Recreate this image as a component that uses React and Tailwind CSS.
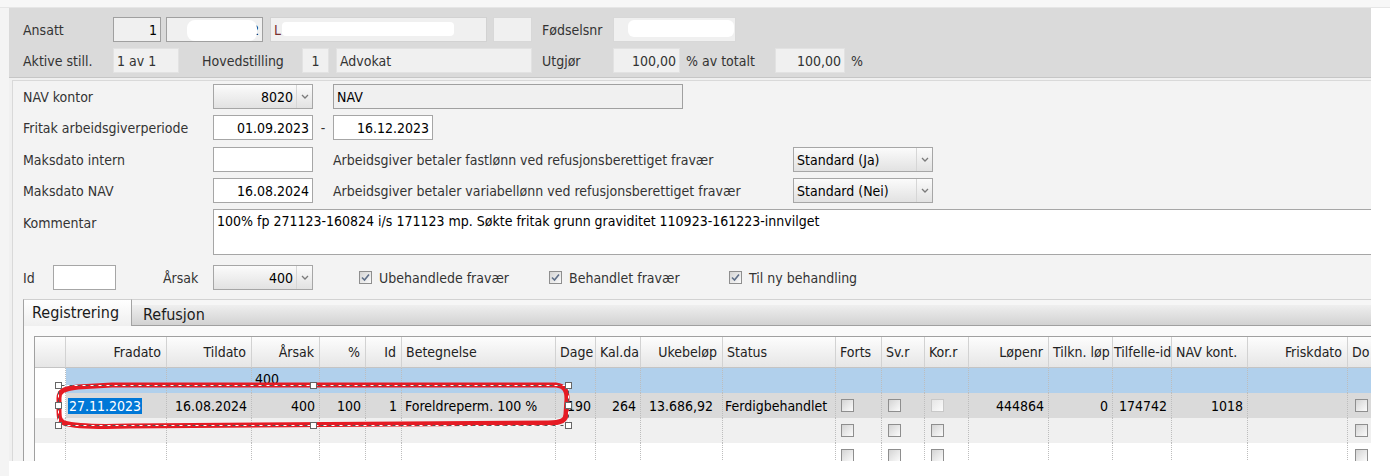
import React from "react";

const font = "font-['DejaVu_Sans_Condensed','Liberation_Sans',sans-serif]";

function Chevron() {
  return (
    <svg width="8" height="5" viewBox="0 0 8 5">
      <path d="M1 1 L4 4 L7 1" fill="none" stroke="#7a7a7a" strokeWidth="1.3" />
    </svg>
  );
}

function Select({ w, value, left }) {
  return (
    <div className={`flex h-[25px] ${w} border border-[#a6a6a6] bg-linear-to-b from-[#fbfbfb] to-[#e2e2e2] text-black`}>
      <div className={`flex flex-1 items-center ${left ? "pl-[3px]" : "justify-end pr-[3px]"}`}>{value}</div>
      <div className="flex w-[16px] items-center justify-center border-l border-[#d6d6d6]">
        <Chevron />
      </div>
    </div>
  );
}

function Field({ w, value, bg = "bg-white", border = "border-[#a6a6a6]", left }) {
  return (
    <div className={`flex h-[25px] ${w} items-center border ${border} ${bg} text-black ${left ? "pl-[3px]" : "justify-end pr-[3px]"}`}>
      {value}
    </div>
  );
}

function Check({ checked, disabled }) {
  return (
    <span
      className={`relative inline-block h-[13px] w-[13px] shrink-0 border ${
        disabled ? "border-[#c8c8c8] from-[#e6e6e6]" : "border-[#8e8e8e] from-[#d4d4d4]"
      } bg-linear-to-br to-[#fbfbfb]`}
    >
      {checked && (
        <svg className="absolute left-0 top-0" width="11" height="11" viewBox="0 0 11 11">
          <path d="M2 5.5 L4.5 8 L9 2.5" fill="none" stroke="#5f6f88" strokeWidth="1.6" />
        </svg>
      )}
    </span>
  );
}

const cols = [
  { label: "", a: "l" },
  { label: "Fradato", a: "r" },
  { label: "Tildato", a: "r" },
  { label: "Årsak", a: "r" },
  { label: "%", a: "r" },
  { label: "Id", a: "r" },
  { label: "Betegnelse", a: "l" },
  { label: "Dage", a: "l" },
  { label: "Kal.da", a: "l" },
  { label: "Ukebeløp", a: "r" },
  { label: "Status", a: "l" },
  { label: "Forts", a: "l" },
  { label: "Sv.r", a: "l" },
  { label: "Kor.r", a: "l" },
  { label: "Løpenr", a: "r" },
  { label: "Tilkn. løp", a: "l" },
  { label: "Tilfelle-id", a: "t" },
  { label: "NAV kont.", a: "l" },
  { label: "Friskdato", a: "r" },
  { label: "Do", a: "l" },
];

const gridCols =
  "grid grid-cols-[31px_101px_85px_68px_46px_36px_154px_40px_45px_82px_113px_46px_43px_44px_80px_64px_59px_76px_100px_53px]";

// row 2 (the selected one)
const row2 = {
  2: "16.08.2024",
  3: "400",
  4: "100",
  5: "1",
  7: "190",
  8: "264",
  9: "13.686,92",
  14: "444864",
  15: "0",
  16: "174742",
  17: "1018",
};

const checkCols = { 11: "pl-[5px]", 12: "pl-[6px]", 13: "pl-[6px]", 19: "pl-[7px]" };

function HeaderCell({ c }) {
  const align =
    c.a === "r" ? "justify-end pr-[5px]" : c.a === "t" ? "pl-[1px]" : "pl-[4px]";
  return (
    <div
      className={`flex h-[31px] items-center overflow-hidden whitespace-nowrap border-b border-r border-b-[#c4c4c4] border-r-[#d2d2d2] bg-linear-to-b from-[#fdfdfd] to-[#e6e6e6] ${align}`}
    >
      {c.label}
    </div>
  );
}

function BodyRow({ idx }) {
  return cols.map((c, i) => {
    let bg = "bg-white";
    if (idx === 0 && i > 0) bg = "bg-[#b1d0ec]";
    if (idx === 1 && i > 0) bg = "bg-[#dadada]";
    if (idx === 2) bg = "bg-[#f0f0f0]";
    let content = null;
    let align = "justify-end pr-[4px]";
    if (idx === 0 && i === 3) {
      content = "400";
      align = "items-start pl-[3px] pt-[3px]";
    }
    if (idx === 1) {
      if (i === 1) {
        content = <span className="bg-[#0078d7] px-[1px] text-white">27.11.2023</span>;
        align = "pl-[2px]";
      } else if (i === 6) {
        content = "Foreldreperm. 100 %";
        align = "pl-[3px]";
      } else if (i === 10) {
        content = "Ferdigbehandlet";
        align = "pl-[2px]";
      } else if (i === 9) {
        content = row2[i];
        align = "justify-end pr-[9px]";
      } else if (row2[i]) {
        content = row2[i];
      }
    }
    if (checkCols[i] && idx > 0) {
      content = <Check disabled={idx === 1 && i === 13} />;
      align = checkCols[i];
    }
    return (
      <div
        key={`${idx}-${i}`}
        className={`flex h-[25px] overflow-hidden whitespace-nowrap border-r border-dotted border-[#bdbdbd] text-black ${bg} ${
          align.includes("items-start") ? "" : "items-center"
        } ${align}`}
      >
        {content}
      </div>
    );
  });
}

export default function App() {
  return (
    <div className={`relative h-[476px] w-[1390px] overflow-hidden bg-white text-[14px] leading-[16px] text-[#333] ${font}`}>
      <div className="h-[8px] border-b border-[#e6e6e6] bg-[#f7f7f7]" />
      <div className="flex h-[468px]">
        <div className="h-full w-[9px] bg-[#f4f4f4]" />
        <div className="flex h-[453px] w-[1362px] flex-col overflow-hidden">
          {/* employee header */}
          <div className="h-[70px] shrink-0 border-b border-[#c6c6c6] bg-[#dadada] pl-[14px] pt-[9px]">
            <div className="flex h-[25px] items-center">
              <div className="w-[90px]">Ansatt</div>
              <Field w="w-[48px]" value="1" bg="bg-[#f0f0f0]" border="border-[#a0a0a0]" />
              <div className="relative ml-[5px]">
                <Field w="w-[97px]" value="2" bg="bg-[#f0f0f0]" border="border-[#a0a0a0]" />
                <div className="absolute left-[21px] top-[3px] h-[21px] w-[70px] rounded-[8px] bg-white" />
              </div>
              <div className="relative ml-[7px]">
                <Field w="w-[217px]" value={<span className="text-[#7a3030]">L</span>} bg="bg-[#f0f0f0]" border="border-[#d2d2d2]" left />
                <div className="absolute left-[12px] top-[5px] h-[14px] w-[172px] rounded-[4px] bg-white" />
              </div>
              <div className="ml-[6px]">
                <Field w="w-[39px]" value="" bg="bg-[#f0f0f0]" border="border-[#d8d8d8]" />
              </div>
              <div className="ml-[10px] w-[71px]">Fødselsnr</div>
              <div className="relative">
                <Field w="w-[123px]" value="" bg="bg-[#f0f0f0]" border="border-[#d8d8d8]" />
                <div className="absolute left-[15px] top-[3px] h-[17px] w-[106px] rounded-[6px] bg-white" />
              </div>
            </div>
            <div className="mt-[6px] flex h-[25px] items-center">
              <div className="w-[90px]">Aktive still.</div>
              <Field w="w-[66px]" value={<span className="text-[#333]">1 av 1</span>} bg="bg-[#f0f0f0]" border="border-[#e2e2e2]" left />
              <div className="ml-[23px] w-[100px]">Hovedstilling</div>
              <div className="flex h-[25px] w-[27px] items-center justify-center border border-[#e2e2e2] bg-[#f0f0f0]">1</div>
              <div className="ml-[7px]">
                <Field w="w-[196px]" value={<span className="text-[#333]">Advokat</span>} bg="bg-[#f0f0f0]" border="border-[#e2e2e2]" left />
              </div>
              <div className="ml-[10px] w-[71px]">Utgjør</div>
              <Field w="w-[67px]" value={<span className="text-[#333]">100,00</span>} bg="bg-[#f0f0f0]" border="border-[#e2e2e2]" />
              <div className="ml-[6px] w-[89px]">% av totalt</div>
              <Field w="w-[70px]" value={<span className="text-[#333]">100,00</span>} bg="bg-[#f0f0f0]" border="border-[#e2e2e2]" />
              <div className="ml-[6px]">%</div>
            </div>
          </div>

          {/* form */}
          <div className="flex flex-1 flex-col bg-[#f0f0f0] pl-[3px] pt-[2px]">
            <div className="flex flex-1 flex-col border-l border-t border-[#d9d9d9] bg-[#f3f3f3] pl-[10px] pt-[3px]">
              <div className="flex h-[25px] items-center">
                <div className="w-[190px]">NAV kontor</div>
                <Select w="w-[100px]" value="8020" />
                <div className="ml-[20px]">
                  <Field w="w-[350px]" value="NAV" bg="bg-[#f0f0f0]" border="border-[#a0a0a0]" left />
                </div>
              </div>
              <div className="mt-[6px] flex h-[25px] items-center">
                <div className="w-[190px]">Fritak arbeidsgiverperiode</div>
                <Field w="w-[100px]" value="01.09.2023" />
                <div className="w-[20px] text-center">-</div>
                <Field w="w-[100px]" value="16.12.2023" />
              </div>
              <div className="mt-[7px] flex h-[25px] items-center">
                <div className="w-[190px]">Maksdato intern</div>
                <Field w="w-[100px]" value="" />
                <div className="ml-[20px] w-[460px]">Arbeidsgiver betaler fastlønn ved refusjonsberettiget fravær</div>
                <Select w="w-[140px]" value="Standard (Ja)" left />
              </div>
              <div className="mt-[6px] flex h-[25px] items-center">
                <div className="w-[190px]">Maksdato NAV</div>
                <Field w="w-[100px]" value="16.08.2024" />
                <div className="ml-[20px] w-[460px]">Arbeidsgiver betaler variabellønn ved refusjonsberettiget fravær</div>
                <Select w="w-[140px]" value="Standard (Nei)" left />
              </div>
              <div className="mt-[6px] flex items-start">
                <div className="w-[190px] pt-[6px]">Kommentar</div>
                <div className="h-[46px] flex-1 whitespace-nowrap border-y border-l border-[#a6a6a6] bg-white pl-[3px] pt-[3px] text-black">
                  100% fp 271123-160824 i/s 171123 mp. Søkte fritak grunn graviditet 110923-161223-innvilget
                </div>
              </div>
              <div className="mt-[10px] flex h-[25px] items-center">
                <div className="w-[30px]">Id</div>
                <Field w="w-[63px]" value="" />
                <div className="ml-[47px] w-[50px]">Årsak</div>
                <Select w="w-[100px]" value="400" />
                <div className="ml-[46px] flex items-center">
                  <Check checked />
                  <div className="ml-[7px] w-[170px]">Ubehandlede fravær</div>
                  <Check checked />
                  <div className="ml-[7px] w-[160px]">Behandlet fravær</div>
                  <Check checked />
                  <div className="ml-[7px]">Til ny behandling</div>
                </div>
              </div>

              {/* tabs */}
              <div className="mt-[9px] flex flex-1 flex-col">
                <div className="flex h-[27px] shrink-0 text-[16px] leading-[18px]">
                  <div className="flex w-[109px] items-center border-x border-t border-x-[#a3a3a3] border-t-[#cfcfcf] bg-linear-to-b from-white to-[#efefef] pl-[8px] text-[#1a1a1a]">
                    Registrering
                  </div>
                  <div className="flex flex-1 flex-col border-t border-[#d2d2d2]">
                    <div className="h-[5px] bg-[#f6f6f6]" />
                    <div className="flex h-[21px] items-center border-b border-[#a0a0a0] bg-linear-to-b from-[#efefef] to-[#d2d2d2] pl-[11px] text-[#1a1a1a]">
                      Refusjon
                    </div>
                  </div>
                </div>
                <div className="flex-1 border-l border-[#a0a0a0] bg-[#fafafa] pl-[10px] pt-[10px]">
                  <div className={`${gridCols} w-[1400px] border-l border-t border-[#a0a0a0] bg-white text-[#222]`}>
                    {cols.map((c, i) => (
                      <HeaderCell key={i} c={c} />
                    ))}
                    {[0, 1, 2, 3].map((r) => (
                      <BodyRow key={r} idx={r} />
                    ))}
                  </div>
                </div>
              </div>
            </div>
          </div>
        </div>
      </div>

      {/* red annotation + selection frame */}
      <svg className="pointer-events-none absolute left-0 top-0" width="1390" height="476">
        <path
          d="M 112 385 L 556 385 C 565 386, 567 391, 567 399 L 566 414 C 566 420, 562 423, 548 423 L 130 426 C 100 427, 74 426, 64 423 C 59 421, 59 416, 59 409 L 59 398 C 59 391, 63 389, 78 387 Z"
          fill="none"
          stroke="#e51b24"
          strokeWidth="5"
          strokeLinejoin="round"
        />
        <rect x="58.5" y="385.5" width="510" height="40" fill="none" stroke="#ffffff" strokeWidth="1" strokeDasharray="5 3" />
        <rect x="58.5" y="385.5" width="510" height="40" fill="none" stroke="#555555" strokeWidth="1" strokeDasharray="3 5" strokeDashoffset="5" />
        {[
          [58, 385],
          [313, 385],
          [568, 385],
          [58, 405],
          [568, 405],
          [58, 425],
          [313, 425],
          [568, 425],
        ].map(([x, y], k) => (
          <rect key={k} x={x - 2.5} y={y - 2.5} width="6" height="6" fill="#ffffff" stroke="#666666" strokeWidth="1" />
        ))}
      </svg>
    </div>
  );
}
